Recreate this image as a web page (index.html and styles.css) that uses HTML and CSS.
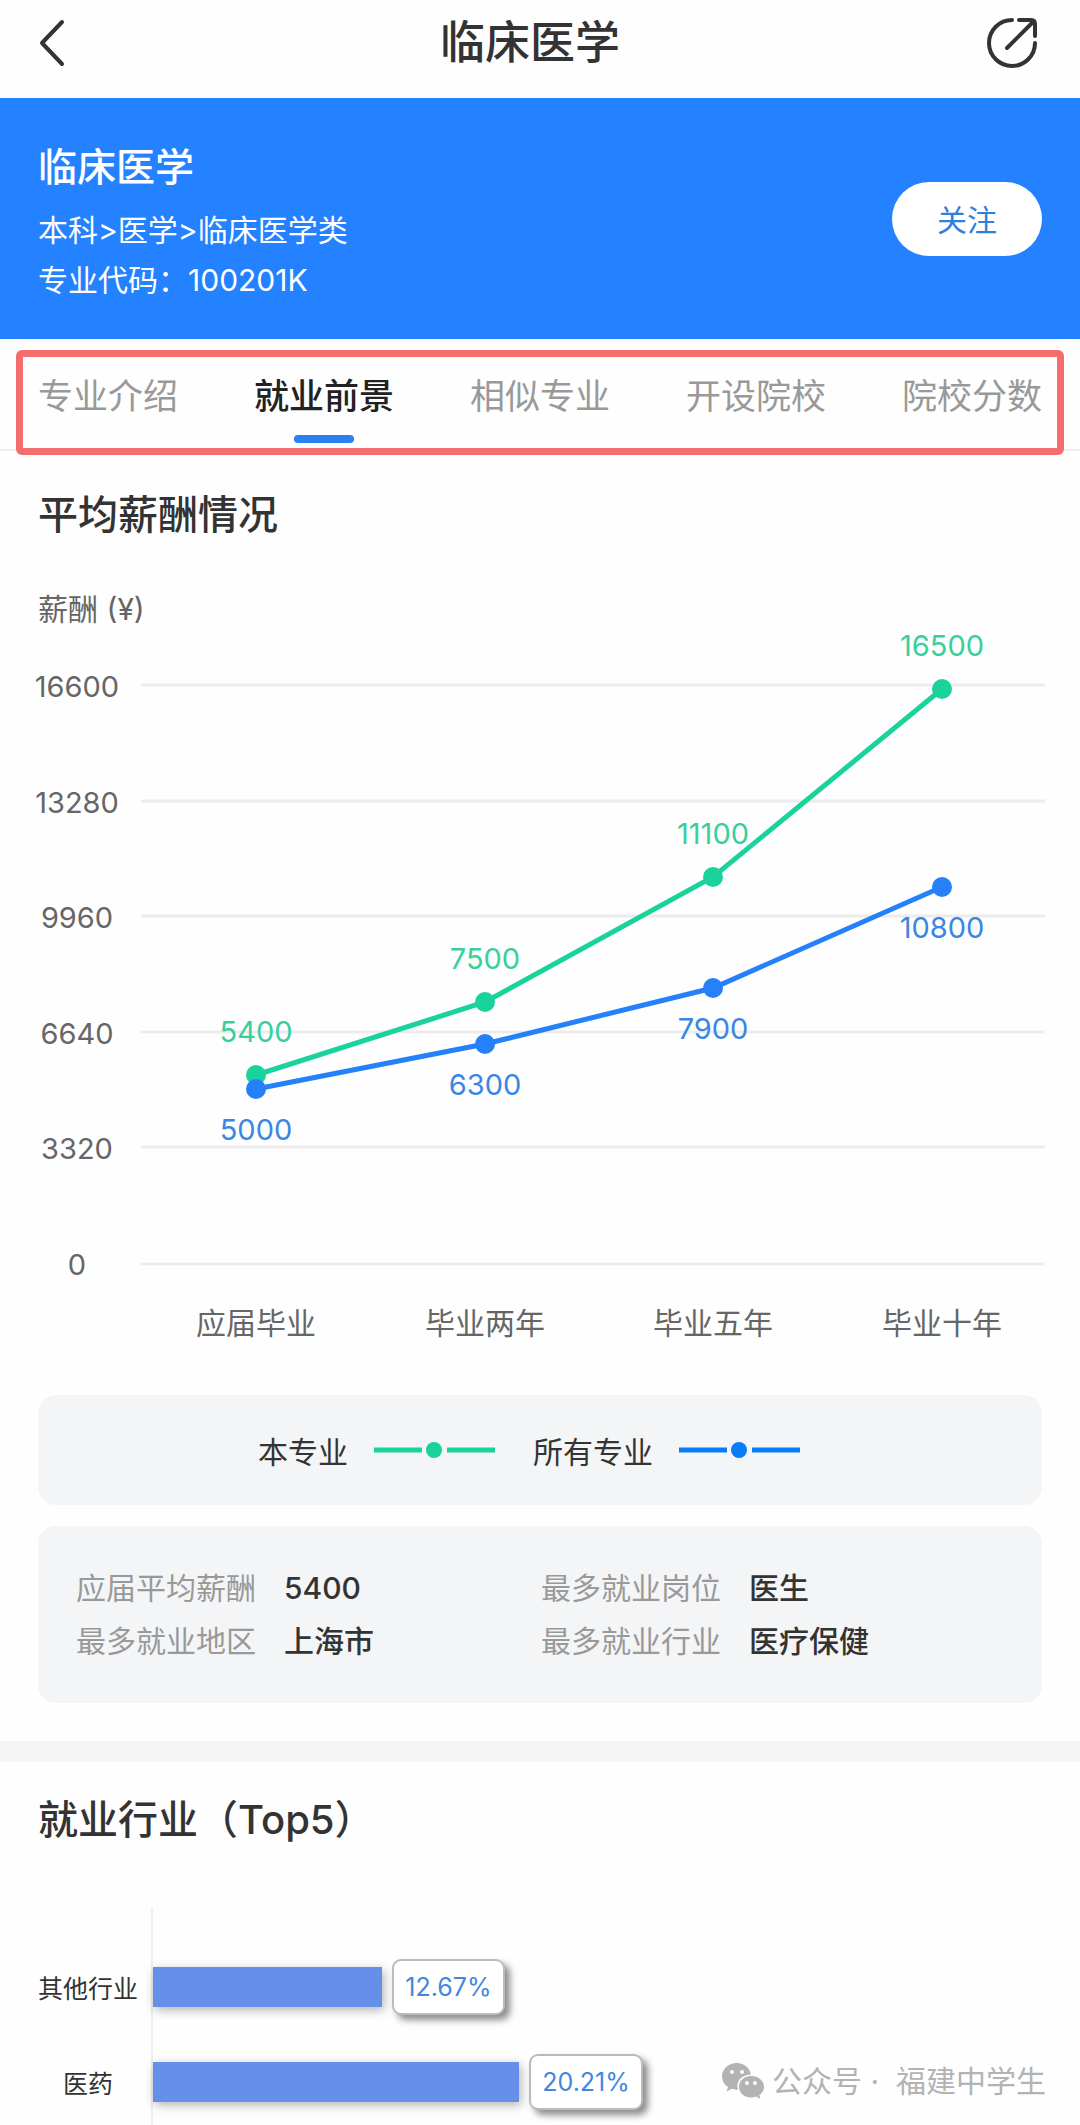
FILE: index.html
```html
<!DOCTYPE html>
<html lang="zh-CN">
<head>
    <meta charset="UTF-8">
    <meta name="viewport" content="width=device-width, initial-scale=1.0">
    <title>临床医学 - 就业前景</title>
    <link rel="stylesheet" href="styles.css">
</head>
<body>

    <header class="topbar">
        <button class="icon-btn" aria-label="返回">
            <svg width="36" height="48" viewBox="0 0 36 48">
                <path d="M24 3 L4 24 L24 45" />
            </svg>
        </button>
        <h1>临床医学</h1>
        <button class="icon-btn" aria-label="分享">
            <svg width="52" height="52" viewBox="0 0 52 52">
                <path d="M26 3 A23 23 0 1 0 49 26" />
                <path d="M33 3 H45 Q49 3 49 7 V19" />
                <path d="M47 5 L21 31" />
            </svg>
        </button>
    </header>

    <section class="hero">
        <div>
            <h2>临床医学</h2>
            <p>本科&gt;医学&gt;临床医学类</p>
            <p>专业代码：100201K</p>
        </div>
        <button class="follow-btn">关注</button>
    </section>

    <nav class="tabs">
        <a href="#intro">专业介绍</a>
        <a href="#jobs" class="active">就业前景</a>
        <a href="#similar">相似专业</a>
        <a href="#colleges">开设院校</a>
        <a href="#scores">院校分数</a>
    </nav>

    <section class="salary">
        <h3>平均薪酬情况</h3>
        <p class="unit">薪酬 (¥)</p>

        <svg class="line-chart" viewBox="0 0 1080 756">
            <g class="grid">
                <path d="M141 76 H1045" />
                <path d="M141 192 H1045" />
                <path d="M141 307 H1045" />
                <path d="M141 423 H1045" />
                <path d="M141 538 H1045" />
                <path d="M141 655 H1045" />
            </g>
            <g class="axis">
                <text x="77" y="88">16600</text>
                <text x="77" y="204">13280</text>
                <text x="77" y="319">9960</text>
                <text x="77" y="435">6640</text>
                <text x="77" y="550">3320</text>
                <text x="77" y="666">0</text>
            </g>
            <g class="axis years">
                <text x="256" y="725">应届毕业</text>
                <text x="485" y="725">毕业两年</text>
                <text x="713" y="725">毕业五年</text>
                <text x="942" y="725">毕业十年</text>
            </g>
            <g class="series green">
                <polyline points="256,466 485,393 713,268 942,80" />
                <circle cx="256" cy="466" r="10" />
                <circle cx="485" cy="393" r="10" />
                <circle cx="713" cy="268" r="10" />
                <circle cx="942" cy="80" r="10" />
                <text x="256" y="433">5400</text>
                <text x="485" y="360">7500</text>
                <text x="713" y="235">11100</text>
                <text x="942" y="47">16500</text>
            </g>
            <g class="series blue">
                <polyline points="256,480 485,435 713,379 942,278" />
                <circle cx="256" cy="480" r="10" />
                <circle cx="485" cy="435" r="10" />
                <circle cx="713" cy="379" r="10" />
                <circle cx="942" cy="278" r="10" />
                <text x="256" y="531">5000</text>
                <text x="485" y="486">6300</text>
                <text x="713" y="430">7900</text>
                <text x="942" y="329">10800</text>
            </g>
        </svg>

        <div class="legend">
            <span>本专业</span>
            <svg class="green" width="121" height="16" viewBox="0 0 121 16">
                <path d="M0 8 H48 M73 8 H121" />
                <circle cx="60" cy="8" r="8" />
            </svg>
            <span>所有专业</span>
            <svg class="blue" width="121" height="16" viewBox="0 0 121 16">
                <path d="M0 8 H48 M73 8 H121" />
                <circle cx="60" cy="8" r="8" />
            </svg>
        </div>

        <dl class="summary">
            <div><dt>应届平均薪酬</dt><dd>5400</dd></div>
            <div><dt>最多就业岗位</dt><dd>医生</dd></div>
            <div><dt>最多就业地区</dt><dd>上海市</dd></div>
            <div><dt>最多就业行业</dt><dd>医疗保健</dd></div>
        </dl>
    </section>

    <section class="industry">
        <h3>就业行业（Top5）</h3>
        <div class="bar-chart">
            <div class="bar-row">
                <span class="bar-label">其他行业</span>
                <div class="bar-track">
                    <div class="bar" style="width: 25.8%"></div>
                    <span class="bar-value">12.67%</span>
                </div>
            </div>
            <div class="bar-row">
                <span class="bar-label">医药</span>
                <div class="bar-track">
                    <div class="bar" style="width: 41.2%"></div>
                    <span class="bar-value">20.21%</span>
                </div>
            </div>
        </div>

        <div class="account">
            <svg width="42" height="36" viewBox="0 0 42 36">
                <path d="M15 0 C6.500 0 0 6 0 13.500 C0 18 2.300 21.500 6 24 L4.500 28.500 L10 25.800 C12 26.500 14 26.800 16 26.700 C13.500 18 20 11.500 29 11.500 C27.800 5 22 0 15 0 Z" />
                <path d="M29 13 C22 13 17 17.800 17 23.700 C17 30 22.500 34.500 29 34.500 C30.800 34.500 32.500 34.200 34 33.600 L38.500 36 L37.300 32.200 C40.200 30.200 42 27.200 42 23.700 C42 17.800 36.500 13 29 13 Z" />
                <g class="eyes">
                    <circle cx="10" cy="9" r="2" />
                    <circle cx="20" cy="9" r="2" />
                    <circle cx="25" cy="20" r="2" />
                    <circle cx="33" cy="20" r="2" />
                </g>
            </svg>
            <span>公众号 ·&nbsp; 福建中学生</span>
        </div>
    </section>

</body>
</html>
```

FILE: styles.css
```css
* {
    box-sizing: border-box;
    margin: 0;
    padding: 0;
}

body {
    font-family: 'Inter', 'Noto Sans CJK SC', sans-serif;
    font-size: 30px;
    background-color: #fefefe;
    color: #333;
}

button {
    font-family: inherit;
    border: none;
    cursor: pointer;
}

h1, h2, h3 {
    font-weight: 500;
}

/* top bar */
.topbar {
    display: flex;
    justify-content: space-between;
    align-items: center;
    height: 98px;
    padding: 0 42px 12px 38px;
}

.topbar h1 {
    font-size: 45px;
    line-height: 60px;
}

.icon-btn {
    display: flex;
    background: none;
}

.icon-btn path {
    fill: none;
    stroke: #333;
    stroke-width: 4;
    stroke-linecap: round;
    stroke-linejoin: round;
}

/* major info */
.hero {
    display: flex;
    justify-content: space-between;
    align-items: center;
    padding: 41px 38px 34px;
    background-color: #2481ff;
    color: #fff;
}

.hero h2 {
    font-size: 39px;
    line-height: 56px;
    margin-bottom: 10px;
}

.hero p {
    line-height: 50px;
}

.follow-btn {
    width: 150px;
    height: 74px;
    margin-bottom: 6px;
    padding-bottom: 2px;
    border-radius: 37px;
    background-color: #fff;
    color: #2f7fdc;
    font-size: 30px;
}

/* tabs */
.tabs {
    position: relative;
    display: flex;
    justify-content: space-between;
    padding: 0 38px;
    border-bottom: 2px solid #eee;
}

.tabs::after {
    content: "";
    position: absolute;
    top: 11px;
    right: 16px;
    bottom: -6px;
    left: 16px;
    border: 7px solid #f56c6c;
    border-radius: 6px;
    pointer-events: none;
}

.tabs a {
    display: flex;
    flex-direction: column;
    align-items: center;
    padding-top: 32px;
    height: 110px;
    color: #999;
    font-size: 35px;
    line-height: 50px;
    text-decoration: none;
}

.tabs a.active {
    color: #222;
    font-weight: 500;
}

.tabs a.active::after {
    content: "";
    width: 60px;
    height: 8px;
    margin-top: 14px;
    border-radius: 4px;
    background-color: #2b7ff0;
}

h3 {
    font-size: 40px;
    line-height: 56px;
}

/* salary */
.salary {
    padding: 36px 38px 38px;
    border-bottom: 21px solid #f5f5f5;
}

.unit {
    margin-top: 46px;
    line-height: 40px;
    color: #666;
}

/* runs to both screen edges, its top strip sits beside the unit */
.line-chart {
    display: block;
    width: calc(100% + 76px);
    margin: -20px -38px 30px;
}

.line-chart text {
    font-size: 29px;
    text-anchor: middle;
}

.line-chart .years text {
    font-size: 30px;
}

.grid path {
    stroke: #ececec;
    stroke-width: 3;
}

.axis text {
    fill: #666;
}

.series polyline {
    fill: none;
    stroke-width: 5;
}

.green {
    fill: #1ad29b;
    stroke: #1ad29b;
}

.blue {
    fill: #2481fa;
    stroke: #2481fa;
}

.series circle, .series text, .legend circle {
    stroke: none;
}

.green text {
    fill: #37d09b;
}

.blue text {
    fill: #3b86e2;
}

.legend {
    display: flex;
    justify-content: center;
    align-items: center;
    height: 110px;
    padding-right: 22px;
    border-radius: 18px;
    background-color: #f4f5f7;
}

.legend svg {
    margin-left: 26px;
    stroke-width: 5;
}

.legend svg.blue {
    fill: #0a7cfa;
    stroke: #0a7cfa;
}

.legend svg + span {
    margin-left: 38px;
}

.summary {
    display: grid;
    grid-template-columns: 13fr 14fr;
    margin-top: 21px;
    padding: 36px 0 35px 38px;
    border-radius: 18px;
    background-color: #f4f5f7;
}

.summary div {
    display: flex;
    gap: 28px;
    line-height: 53px;
}

.summary dt {
    color: #999;
}

.summary dd {
    font-weight: 500;
}

/* industry */
.industry {
    position: relative;
    padding: 30px 38px 0;
}

.bar-chart {
    margin-top: 59px;
}

.bar-row {
    display: flex;
    align-items: stretch;
    height: 95px;
    font-size: 25px;
}

.bar-row:first-child {
    height: 127px;
}

.bar-row:first-child .bar-label,
.bar-row:first-child .bar-track {
    padding-top: 32px;
}

.bar-label {
    display: flex;
    justify-content: center;
    align-items: center;
    width: 100px;
    margin-right: 13px;
}

.bar-track {
    display: flex;
    flex: 1;
    align-items: center;
    border-left: 2px solid #eee;
}

.bar {
    height: 40px;
    background-color: #658fe8;
    box-shadow: 2px 3px 10px rgba(0, 0, 0, 0.3);
}

.bar-value {
    margin-left: 10px;
    padding: 0 11px;
    border: 2px solid #bbb;
    border-radius: 9px;
    background-color: #fff;
    color: #3f88e0;
    line-height: 52px;
    box-shadow: 5px 5px 7px rgba(0, 0, 0, 0.45);
}

/* account mark over the chart */
.account {
    position: absolute;
    right: 34px;
    bottom: 26px;
    display: flex;
    align-items: center;
    gap: 8px;
    color: #b3b3b3;
    fill: #b3b3b3;
    line-height: 44px;
}

.eyes {
    fill: #fefefe;
}
```
